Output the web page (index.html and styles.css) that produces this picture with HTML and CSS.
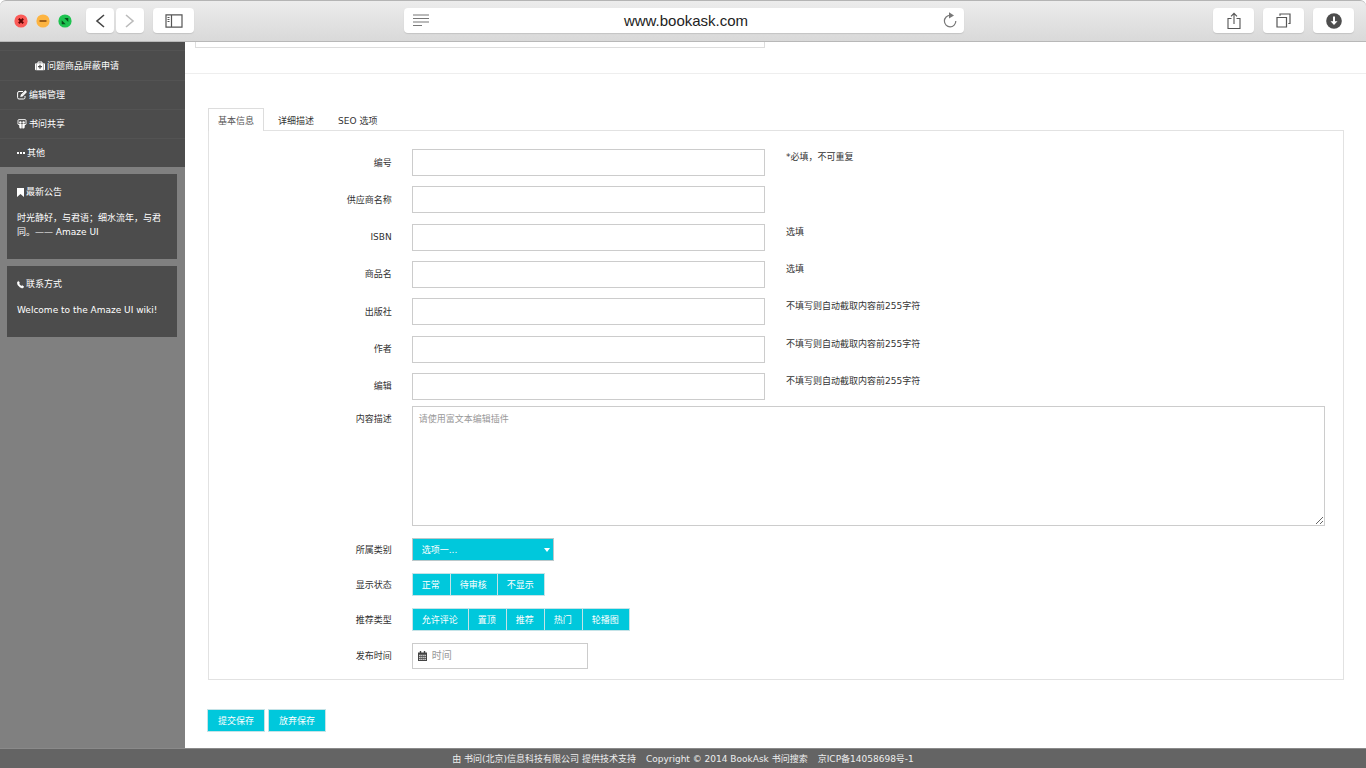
FILE: index.html
```html
<!DOCTYPE html>
<html lang="zh-CN">
<head>
<meta charset="utf-8">
<meta name="viewport" content="width=device-width, initial-scale=1">
<title>www.bookask.com</title>
<link rel="stylesheet" href="styles.css">
</head>
<body>
<header class="chrome">
  <div class="chrome-side">
    <div class="lights">
      <button class="light" type="button" aria-label="关闭"><svg viewBox="0 0 14 14"><circle cx="7" cy="7" r="6.6" fill="#fb5a57"/><path d="M4.8 4.8l4.4 4.4M9.2 4.8L4.8 9.2" stroke="#5d0504" stroke-width="2"/></svg></button>
      <button class="light" type="button" aria-label="最小化"><svg viewBox="0 0 14 14"><circle cx="7" cy="7" r="6.6" fill="#fdb441"/><path d="M3.5 7h7" stroke="#985712" stroke-width="1.8"/></svg></button>
      <button class="light" type="button" aria-label="全屏"><svg viewBox="0 0 14 14"><circle cx="7" cy="7" r="6.6" fill="#1ec350"/><path d="M6.3 4h4v4zM3.7 6.2l4 4h-4z" fill="#07501b"/></svg></button>
    </div>
    <div class="nav">
      <button class="tool tool-nav" type="button" aria-label="后退"><svg width="12" height="16" viewBox="0 0 12 16" fill="none" stroke="#444" stroke-width="1.6"><path d="M10 2L3 8l7 6"/></svg></button>
      <button class="tool tool-nav" type="button" aria-label="前进"><svg width="12" height="16" viewBox="0 0 12 16" fill="none" stroke="#bbb" stroke-width="1.6"><path d="M2 2l7 6-7 6"/></svg></button>
    </div>
    <button class="tool" type="button" aria-label="边栏"><svg width="18" height="14" viewBox="0 0 18 14" fill="none" stroke="#555"><path d="M1 .8h16v12.4H1zM6.5 1v12" stroke-width="1.2"/><path d="M2.5 3.5h2M2.5 5.5h2M2.5 7.5h2"/></svg></button>
  </div>
  <div class="address">
    <svg width="16" height="13" viewBox="0 0 16 13" stroke="#777" stroke-width="1.2"><path d="M0 1h16M0 4.5h16M0 8h16M0 11.5h9"/></svg>
    <span class="address-text">www.bookask.com</span>
    <button class="reload" type="button" aria-label="刷新"><svg width="14" height="17" viewBox="0 0 14 17"><path d="M7.2 3.4A5.7 5.7 0 1 0 12.8 9" fill="none" stroke="#777" stroke-width="1.2"/><path d="M6 .3l5 3.1-5 3z" fill="#777"/></svg></button>
  </div>
  <div class="chrome-side chrome-right">
    <button class="tool" type="button" aria-label="分享"><svg width="14" height="18" viewBox="0 0 14 18" fill="none" stroke="#555" stroke-width="1.1"><path d="M4.5 6.5H1v10h12v-10H9.5M7 12V1.5M4 4.3l3-3 3 3"/></svg></button>
    <button class="tool" type="button" aria-label="标签页"><svg width="15" height="15" viewBox="0 0 15 15" fill="none" stroke="#555" stroke-width="1.2"><path d="M1 4.5h9.5V14H1zM4 2.8V1h10v9.5h-1.7"/></svg></button>
    <button class="tool" type="button" aria-label="下载"><svg width="16" height="16" viewBox="0 0 16 16"><circle cx="8" cy="8" r="7.8" fill="#4d4d4d"/><path d="M7 3.5h2v4.7h2.5L8 12 4.500 8.2H7z" fill="#fff"/></svg></button>
  </div>
</header>

<div class="page">
  <aside class="sidebar">
    <nav class="menu">
      <a class="menu-item menu-sub" href="#"><svg width="10" height="10" viewBox="0 0 10 10"><path d="M3 2.5V1h4v1.5" fill="none" stroke="#fff"/><path d="M1 2.3h8q1 0 1 1v5q0 1-1 1H1q-1 0-1-1v-5q0-1 1-1z" fill="#fff"/><path d="M5 3.7v4M3 5.7h4" stroke="#4c4c4c" stroke-width="1.3"/><path d="M1.5 2.5v7M8.5 2.5v7" stroke="#4c4c4c" stroke-width=".4"/></svg>问题商品屏蔽申请</a>
      <a class="menu-item" href="#"><svg width="10" height="10" viewBox="0 0 10 10" fill="none" stroke="#fff"><path d="M6 1.500H2Q.6 1.500.6 3v4.500Q.6 9 2 9h4.500Q8 9 8 7.500V6"/><path d="M4 6.300l.3-1.300L8.300 1l.9.900-3.900 4z" stroke-width="1.100"/></svg>编辑管理</a>
      <a class="menu-item" href="#"><svg width="10" height="10" viewBox="0 0 10 10"><path d="M1 4.500V1.500Q1 .6 2 .6h6q1 0 1 .9v3" fill="none" stroke="#fff" stroke-width=".9"/><circle cx="3.400" cy="3.500" r="1.200" fill="#fff"/><circle cx="6.600" cy="3.500" r="1.200" fill="#fff"/><path d="M0 4.300q1.500 1.200 4.700.6v4.400q-1.700.8-2.300-.5l-.2-2.500Q.8 5.800 0 4.300zM10 4.300q-1.500 1.200-4.700.6v4.400q1.700.8 2.300-.5l.2-2.500Q9.200 5.800 10 4.300z" fill="#fff"/></svg>书问共享</a>
      <a class="menu-item" href="#"><svg width="8" height="10" viewBox="0 0 8 10" fill="#fff"><path d="M0 4h2v2H0zM3 4h2v2H3zM6 4h2v2H6z"/></svg>其他</a>
    </nav>
    <section class="card">
      <h2 class="card-title"><svg width="7" height="9" viewBox="0 0 7 9"><path d="M0 0h7v9L3.500 6 0 9z" fill="#fff"/></svg>最新公告</h2>
      <p class="card-text">时光静好，与君语；细水流年，与君同。—— Amaze UI</p>
    </section>
    <section class="card">
      <h2 class="card-title"><svg width="7" height="9" viewBox="0 0 8 9"><path d="M1.700.7L.3 1.800C-.2 4.700 3.200 8.500 6.500 8.500L8 7.200 6 5.500l-1.100.8C3.700 5.700 2.800 4.700 2.300 3.600l.8-.8z" fill="#fff" stroke="#fff" stroke-width=".5"/></svg>联系方式</h2>
      <p class="card-text">Welcome to the Amaze UI wiki!</p>
    </section>
  </aside>

  <main class="main">
    <div class="previous-box"></div>
    <hr class="rule">
    <form class="editor">
      <div class="tabs" role="tablist">
        <button class="tab tab-active" type="button" role="tab" aria-selected="true">基本信息</button>
        <button class="tab" type="button" role="tab" aria-selected="false">详细描述</button>
        <button class="tab" type="button" role="tab" aria-selected="false">SEO 选项</button>
      </div>
      <div class="panel">
        <div class="fields">
          <div class="row"><label class="label" for="code">编号</label><input class="input" id="code" type="text"><span class="note">*必填，不可重复</span></div>
          <div class="row"><label class="label" for="supplier">供应商名称</label><input class="input" id="supplier" type="text"></div>
          <div class="row"><label class="label" for="isbn">ISBN</label><input class="input" id="isbn" type="text"><span class="note">选填</span></div>
          <div class="row"><label class="label" for="product">商品名</label><input class="input" id="product" type="text"><span class="note">选填</span></div>
          <div class="row"><label class="label" for="press">出版社</label><input class="input" id="press" type="text"><span class="note">不填写则自动截取内容前255字符</span></div>
          <div class="row"><label class="label" for="author">作者</label><input class="input" id="author" type="text"><span class="note">不填写则自动截取内容前255字符</span></div>
          <div class="row"><label class="label" for="edit">编辑</label><input class="input" id="edit" type="text"><span class="note">不填写则自动截取内容前255字符</span></div>
        </div>
        <div class="row row-text"><label class="label" for="content">内容描述</label><textarea class="textarea" id="content" placeholder="请使用富文本编辑插件"></textarea></div>
        <div class="options">
          <div class="row"><label class="label" for="category">所属类别</label>
            <div class="select-wrap"><select class="select" id="category"><option>选项一...</option><option>选项二...</option></select><svg class="caret" width="6" height="4" viewBox="0 0 6 4"><path d="M0 0h6L3 4z" fill="#fff"/></svg></div>
          </div>
          <div class="row"><span class="label" id="status">显示状态</span>
            <div class="group" role="group" aria-labelledby="status"><button class="btn" type="button">正常</button><button class="btn" type="button">待审核</button><button class="btn" type="button">不显示</button></div>
          </div>
          <div class="row"><span class="label" id="kind">推荐类型</span>
            <div class="group" role="group" aria-labelledby="kind"><button class="btn" type="button">允许评论</button><button class="btn" type="button">置顶</button><button class="btn" type="button">推荐</button><button class="btn" type="button">热门</button><button class="btn" type="button">轮播图</button></div>
          </div>
          <div class="row"><label class="label" for="date">发布时间</label>
            <div class="date"><svg width="9" height="10" viewBox="0 0 9 10"><path d="M0 1.500h9V10H0z" fill="#444"/><path d="M2.500 0v2.500M6.500 0v2.500" stroke="#444" stroke-width="1.400"/><path d="M1 4.300h7M1 6.300h7M1 8.300h7" stroke="#ccc" stroke-width="1.200"/><path d="M2.700 3.700v5.500M4.500 3.700v5.500M6.300 3.700v5.500" stroke="#555" stroke-width=".5"/></svg><input class="date-input" id="date" type="text" placeholder="时间"></div>
          </div>
        </div>
      </div>
      <div class="actions"><button class="btn" type="button">提交保存</button><button class="btn" type="button">放弃保存</button></div>
    </form>
  </main>
</div>
<footer class="footer"><span>由 书问(北京)信息科技有限公司 提供技术支持</span><span>Copyright © 2014 BookAsk 书问搜索</span><span>京ICP备14058698号-1</span></footer>
</body>
</html>
```
FILE: styles.css
```css
* { box-sizing: border-box; }
body {
  margin: 0;
  min-height: 100vh;
  display: flex;
  flex-direction: column;
  background: #fff;
  color: #333;
  font: 9px/14px "DejaVu Sans", "Noto Sans CJK SC", sans-serif;
}
button, input, select, textarea { font: inherit; color: inherit; margin: 0; border-radius: 0; }
button { padding: 0; border: 0; background: none; }
svg { display: block; flex: none; }

.chrome {
  display: flex;
  align-items: center;
  height: 42px;
  padding: 0 12px 1px 14px;
  background: linear-gradient(#ececec, #d9d9d9);
  border-top: 1px solid #b4b4b4;
  border-bottom: 1px solid #b8b8b8;
  border-radius: 6px 6px 0 0;
}
.chrome-side { flex: 1; display: flex; align-items: center; gap: 9px; }
.chrome-right { justify-content: flex-end; }
.lights { display: flex; gap: 8px; margin-right: 5px; }
.light { width: 14px; height: 14px; }
.nav { display: flex; gap: 2px; }
.tool {
  display: flex;
  align-items: center;
  justify-content: center;
  width: 41px;
  height: 25px;
  background: #fff;
  border-radius: 4px;
  box-shadow: 0 1px 1px #c4c4c4;
}
.tool-nav { width: 28px; }
.address {
  width: 41vw;
  height: 25px;
  padding: 0 7px 0 9px;
  display: flex;
  align-items: center;
  background: #fff;
  border-radius: 4px;
  box-shadow: 0 1px 1px #c4c4c4;
}
.address-text { flex: 1; text-align: center; color: #222; font: 15px/24px "Liberation Sans", sans-serif; }

.page { flex: 1; display: flex; }
.sidebar { width: 185px; flex: none; background: #808080; color: #fff; }
.menu { padding-top: 8px; background: #4c4c4c; margin-bottom: 7px; }
.menu-item {
  display: flex;
  align-items: center;
  gap: 2px;
  height: 29px;
  padding: 0 17px;
  border-top: 1px solid #535353;
  color: #fff;
  text-decoration: none;
}
.menu-sub { height: 30px; padding-left: 35px; }
.card { margin: 0 8px 7px 7px; padding: 11px 10px 10px; background: #4c4c4c; }
.card-title { display: flex; align-items: center; gap: 2px; margin: 0 0 12px; font-size: 9px; line-height: 14px; font-weight: 400; }
.card-text { margin: 0 0 10px; }

.main { flex: 1; min-width: 0; }
.previous-box { height: 6px; width: 570px; max-width: 100%; margin-left: 10px; border: 1px solid #ddd; border-top: 0; }
.rule { margin: 25px 0 34px; border: 0; border-top: 1px solid #eee; }
.editor { padding: 0 22px 16px; }
.tabs { display: flex; gap: 4px; margin-left: 1px; }
.tab { height: 23px; padding: 1px 9px 0; border: 1px solid transparent; border-bottom: 0; }
.tab-active { position: relative; z-index: 1; background: #fff; border-color: #ddd; color: #555; }
.panel { margin: -1px 0 0 1px; padding: 18px 8px 10px 6px; border: 1px solid #e2e2e2; }
.fields { display: grid; align-content: space-between; min-height: 251px; }
.row { display: grid; grid-template-columns: 2fr 4fr 6fr; align-items: center; }
.label { padding-right: 10px; text-align: right; }
.input, .textarea { height: 27px; margin: 0 10px; padding: 5px 6px; background: #fff; border: 1px solid #ccc; }
.note { align-self: start; padding: 1px 0 0 11px; }
.row-text { align-items: start; margin: 6px 0 12px; }
.row-text .label { padding-top: 6px; }
.textarea { grid-column: 2 / 4; height: 120px; resize: both; }
.textarea::placeholder, .date-input::placeholder { color: #999; opacity: 1; }
.options { display: grid; gap: 12px; }
.select-wrap { position: relative; width: 142px; margin-left: 10px; }
.select { display: block; appearance: none; width: 100%; height: 23px; padding: 0 9px; background: #00c8dc; color: #fff; border: 1px solid #bbc8ca; }
.caret { position: absolute; right: 4px; top: 10px; }
.group { display: flex; margin-left: 10px; }
.btn { height: 23px; padding: 0 9px; background: #00c8dc; border: 1px solid #c5e3e7; color: #fff; white-space: nowrap; }
.group .btn { padding: 0 10px 0 9px; }
.group .btn + .btn { border-left: 0; }
.date { display: flex; align-items: center; gap: 5px; width: 176px; height: 26px; margin-left: 10px; padding: 0 5px; border: 1px solid #ccc; }
.date-input { flex: 1; min-width: 0; padding: 0; border: 0; background: none; font-size: 10px; }
.actions { display: flex; gap: 3px; margin-top: 29px; }
.actions .btn { padding: 0 10px; }

.footer {
  display: flex;
  justify-content: center;
  gap: 10px;
  padding: 3px 0;
  border-top: 1px solid #8a8a8a;
  background: #646464;
  color: #eee;
  line-height: 15px;
}
```
